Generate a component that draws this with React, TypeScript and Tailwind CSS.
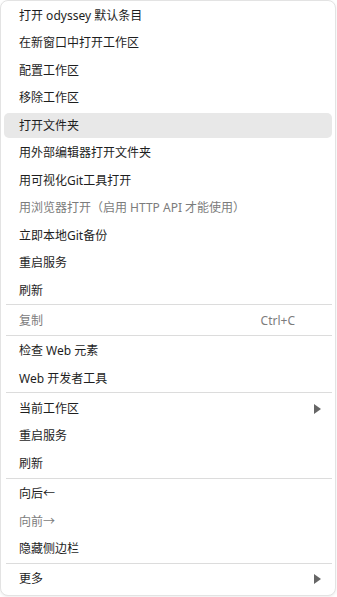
import React from 'react';

type Entry =
  | { kind: 'item'; label: string; disabled?: boolean; shortcut?: string; submenu?: boolean; active?: boolean }
  | { kind: 'sep' };

const entries: Entry[] = [
  { kind: 'item', label: '打开 odyssey 默认条目' },
  { kind: 'item', label: '在新窗口中打开工作区' },
  { kind: 'item', label: '配置工作区' },
  { kind: 'item', label: '移除工作区' },
  { kind: 'item', label: '打开文件夹', active: true },
  { kind: 'item', label: '用外部编辑器打开文件夹' },
  { kind: 'item', label: '用可视化Git工具打开' },
  { kind: 'item', label: '用浏览器打开（启用 HTTP API 才能使用）', disabled: true },
  { kind: 'item', label: '立即本地Git备份' },
  { kind: 'item', label: '重启服务' },
  { kind: 'item', label: '刷新' },
  { kind: 'sep' },
  { kind: 'item', label: '复制', disabled: true, shortcut: 'Ctrl+C' },
  { kind: 'sep' },
  { kind: 'item', label: '检查 Web 元素' },
  { kind: 'item', label: 'Web 开发者工具' },
  { kind: 'sep' },
  { kind: 'item', label: '当前工作区', submenu: true },
  { kind: 'item', label: '重启服务' },
  { kind: 'item', label: '刷新' },
  { kind: 'sep' },
  { kind: 'item', label: '向后←' },
  { kind: 'item', label: '向前→', disabled: true },
  { kind: 'item', label: '隐藏侧边栏' },
  { kind: 'sep' },
  { kind: 'item', label: '更多', submenu: true },
];

function Arrow() {
  return (
    <svg width="7" height="10" viewBox="0 0 7 10" className="shrink-0">
      <polygon points="0,0 7,5 0,10" fill="#666666" />
    </svg>
  );
}

export default function App() {
  return (
    <div className="w-[337px] h-[597px] bg-white font-['Segoe_UI','Noto_Sans','Noto_Sans_CJK_SC',sans-serif] text-[12px]">
      <div className="w-[336px] h-[596px] bg-white border border-[#e3e3e3] rounded-[8px] shadow-[0_1px_3px_rgba(0,0,0,0.08)] px-[3px] pt-[0.75px] pb-[2px] flex flex-col">
        {entries.map((e, i) =>
          e.kind === 'sep' ? (
            <div key={i} className="h-px bg-[#dcdcdc] ml-[2px] mb-[2.25px]" />
          ) : (
            <div key={i} className="py-[1.25px]">
              <div
                className={`h-[25px] flex items-center rounded-[5px] pl-[15px] pr-[11px] ${
                  e.active ? 'bg-[#e8e8e8]' : ''
                } ${e.disabled ? 'text-[#7c7c7c]' : 'text-[#1e1e1e]'}`}
              >
                <span className="flex-1 whitespace-nowrap">{e.label}</span>
                {e.shortcut && <span className="mr-[26px] text-[12px]">{e.shortcut}</span>}
                {e.submenu && <Arrow />}
              </div>
            </div>
          )
        )}
      </div>
    </div>
  );
}
